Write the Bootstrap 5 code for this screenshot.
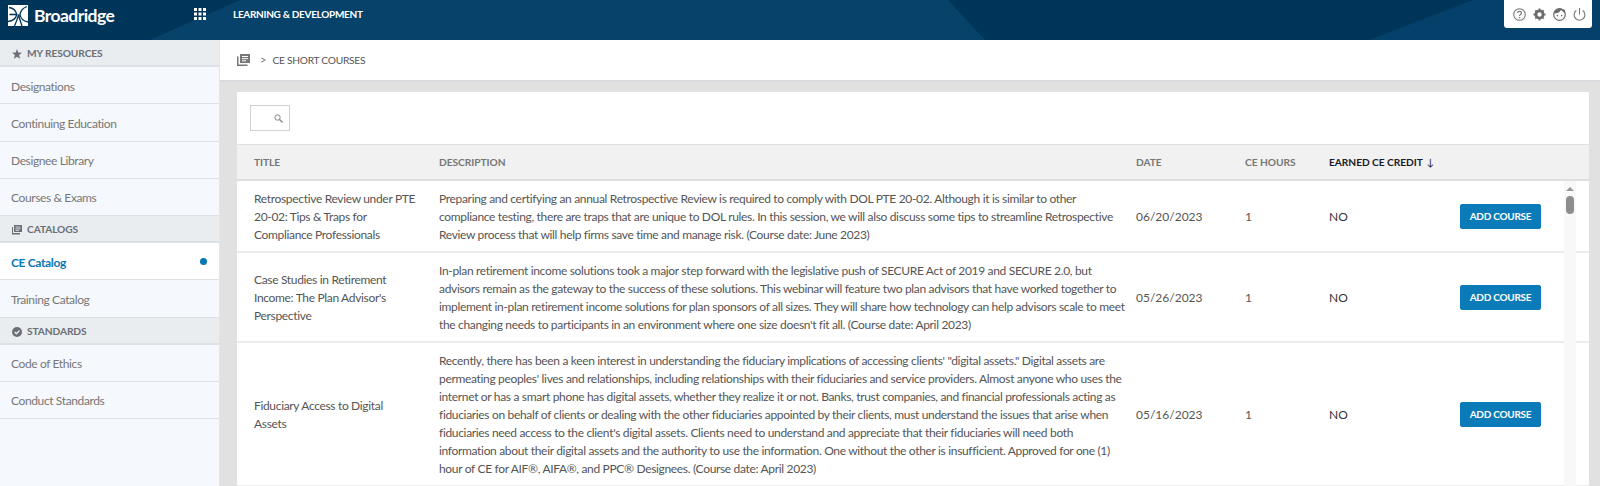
<!DOCTYPE html>
<html lang="en">
<head>
<meta charset="utf-8">
<title>CE Short Courses</title>
<link rel="stylesheet" href="https://cdn.jsdelivr.net/npm/bootstrap@5.3.0/dist/css/bootstrap.min.css">
<style>
html,body{height:486px;overflow:hidden}
body{font-family:"Lato","Liberation Sans",sans-serif;font-size:12px;color:#555;background:#e1e1e1}
.topbar{height:40px;background:#00355a;position:relative;color:#fff}
.topbar-art{position:absolute;inset:0;width:100%;height:100%}
.topbar-in{position:relative;height:40px}
.brand-box{width:220px;padding-left:8px;padding-top:3px;height:28px}
.brand-word{font-weight:700;font-size:17.5px;letter-spacing:-.55px;margin-left:6px;line-height:1}
.grid-btn{position:absolute;left:194px;top:8px;display:flex}
.app-title{margin-left:13px;font-size:10px;font-weight:700;letter-spacing:-.3px;line-height:28px}
.tools{position:absolute;right:8px;top:0;width:88px;height:28px;background:#fff;border-radius:0 0 3px 3px;gap:5px;padding-left:8px}
.side{width:220px;flex:none;background:#f5f8fc;height:446px;border-right:1px solid #e1e4e8}
.side-head{height:27px;background:#e9edf0;border-bottom:2px solid #dde1e5;color:#6b6f75;font-size:10.2px;font-weight:700;padding:3px 0 0 12px;gap:5px;letter-spacing:-.1px}
.side-link{display:flex;align-items:center;height:37.25px;padding:3px 11px 0;border-bottom:1px solid #dde1e5;color:#777;font-size:12px;letter-spacing:-.38px;text-decoration:none}
.side-link.on{background:#fff;color:#0a77b5;font-weight:700;justify-content:space-between;letter-spacing:-.35px}
.side-dot{width:7px;height:7px;border-radius:50%;background:#0a77b5;margin-right:1px;margin-top:-3px}
.mainpane{flex:1;min-width:0}
.crumbbar{height:42px;background:#fff;border-bottom:2px solid #d9d9dd;padding-left:17px;font-size:10.2px;color:#555}
.crumb-sep{margin:0 6px 0 10px;color:#777;font-size:11px}
.crumb-now{letter-spacing:-.25px;padding-top:2px}
.sheet{margin:10px 11px 0 17px;background:#fff;position:relative;height:394px;overflow:hidden}
.searchrow{height:53px;padding:13px 0 0 13px;border-bottom:1px solid #e1e1e1}
.searchbox{width:40px;height:26px;border:1px solid #cfd3d6;padding-right:6px}
.ctable{table-layout:fixed;width:1352px;margin:0;font-size:12px;line-height:18px;color:#555}
.ctable th{background:#f1f1f1;height:35px;padding:0 0 0 17px;font-size:10.2px;font-weight:700;color:#777;border-bottom:2px solid #dedede;vertical-align:middle;white-space:nowrap;letter-spacing:-.05px}
.ctable th.sorted{color:#1a1a2a}
.ctable td{padding:9px 0 7px 17px;vertical-align:middle;border-bottom:2px solid #ececec;color:#555;white-space:nowrap;background:#fff;letter-spacing:-.33px}
.ctable td.meta{letter-spacing:0}
.ctable td.answer{letter-spacing:0;color:#333}
.add-btn{--bs-btn-bg:#0a7ab8;--bs-btn-border-color:#0a7ab8;--bs-btn-color:#fff;--bs-btn-hover-bg:#0a7ab8;--bs-btn-hover-color:#fff;width:81px;height:25px;padding:0;font-size:10px;font-weight:700;letter-spacing:-.25px;border-radius:2px;margin-top:-2px}
.sort-arrow{font-weight:400;margin-left:4px}
.scrolltrack{position:absolute;right:13px;top:89px;width:12px;bottom:0;background:#f8f8f8}
.scrollup{position:absolute;left:2px;top:6px;width:0;height:0;border-left:4px solid transparent;border-right:4px solid transparent;border-bottom:4px solid #999}
.scrollthumb{position:absolute;left:2px;top:15px;width:8px;height:18px;border-radius:4px;background:#8d8d8d}
</style>
</head>
<body>
<header class="topbar">
  <svg class="topbar-art" viewBox="0 0 1600 40" preserveAspectRatio="none" aria-hidden="true">
    <polygon points="150,40 240,0 948,0 985,40" fill="#07426a"/>
    <polygon points="1369,40 1473,0 1600,0 1600,40" fill="#04406a"/>
  </svg>
  <div class="topbar-in d-flex align-items-start">
    <div class="brand-box d-flex align-items-center">
      <svg width="20" height="21" viewBox="0 0 20 21" aria-hidden="true"><rect width="20" height="21" fill="#fff"/><path d="M1 2.500C5 3 8 6 8.800 9.500C8 13 5 16 0 16.500M8.800 9.500H1.500M19 1.500C15 3 12.500 6 12 9.500C12.500 13 15 16 20 17M6.500 21C8 17 10 13 10.500 9.500C11.500 14 13 18 14 21" fill="none" stroke="#00355a" stroke-width="1.300"/></svg>
      <span class="brand-word">Broadridge</span>
      <span class="grid-btn">
        <svg width="12" height="12" viewBox="0 0 12 12" aria-hidden="true" fill="#fff"><rect width="3" height="3"/><rect x="4.500" width="3" height="3"/><rect x="9" width="3" height="3"/><rect y="4.500" width="3" height="3"/><rect x="4.500" y="4.500" width="3" height="3"/><rect x="9" y="4.500" width="3" height="3"/><rect y="9" width="3" height="3"/><rect x="4.500" y="9" width="3" height="3"/><rect x="9" y="9" width="3" height="3"/></svg>
      </span>
    </div>
    <span class="app-title">LEARNING &amp; DEVELOPMENT</span>
    <div class="tools d-flex align-items-center">
      <svg width="15" height="15" viewBox="0 0 15 15" aria-hidden="true"><circle cx="7.500" cy="7.500" r="5.800" fill="none" stroke="#777" stroke-width="1.100"/><path d="M5.600 6C5.700 3.800 9.500 3.800 9.500 6C9.500 7.500 7.500 7.300 7.500 9" fill="none" stroke="#777" stroke-width="1.200"/><circle cx="7.500" cy="10.800" r=".8" fill="#777"/></svg>
      <svg width="15" height="15" viewBox="0 0 15 15" aria-hidden="true"><circle cx="7.500" cy="7.500" r="3.600" fill="none" stroke="#6b6b6b" stroke-width="2.800"/><path d="M7.500 1.500V13.500M1.500 7.500H13.500M3.300 3.300L11.700 11.700M11.700 3.300L3.300 11.700" stroke="#6b6b6b" stroke-width="1.800" stroke-dasharray="2.300 8.400 2.300 0"/></svg>
      <svg width="15" height="15" viewBox="0 0 15 15" aria-hidden="true"><circle cx="7.500" cy="7.500" r="5.800" fill="none" stroke="#6b6b6b" stroke-width="1.200"/><path d="M2 6.500C5 6.500 8 5.500 9 3L13 6.500V3L8 1.500L3 3Z" fill="#6b6b6b"/><circle cx="5.400" cy="8.600" r=".8" fill="#6b6b6b"/><circle cx="9.600" cy="8.600" r=".8" fill="#6b6b6b"/></svg>
      <svg width="15" height="15" viewBox="0 0 15 15" aria-hidden="true"><path d="M4.300 3.500A5.400 5.400 0 1 0 10.700 3.500M7.500 1V7.500" fill="none" stroke="#777" stroke-width="1.100"/></svg>
    </div>
  </div>
</header>
<div class="d-flex">
  <nav class="side">
    <div class="side-head d-flex align-items-center"><svg width="10" height="10" viewBox="0 0 10 10" aria-hidden="true"><path d="M5 0L6.300 3.400 10 3.700 7.100 6 8.100 9.700 5 7.700 1.900 9.700 2.900 6 0 3.700 3.700 3.400Z" fill="#6b6f75"/></svg>MY RESOURCES</div>
    <a class="side-link" href="#">Designations</a>
    <a class="side-link" href="#">Continuing Education</a>
    <a class="side-link" href="#">Designee Library</a>
    <a class="side-link" href="#">Courses &amp; Exams</a>
    <div class="side-head d-flex align-items-center"><svg width="10" height="10" viewBox="0 0 10 10" aria-hidden="true"><path d="M2 0H10V7H2ZM0 2H1V8H8V9.500H0Z" fill="#6b6f75"/><path d="M3.500 2H8.500M3.500 3.800H8.500M3.500 5.400H7" stroke="#e9edf0" stroke-width=".8"/></svg>CATALOGS</div>
    <a class="side-link on" href="#">CE Catalog<span class="side-dot"></span></a>
    <a class="side-link" href="#">Training Catalog</a>
    <div class="side-head d-flex align-items-center"><svg width="10" height="10" viewBox="0 0 10 10" aria-hidden="true"><circle cx="5" cy="5" r="5" fill="#6b6f75"/><path d="M2.700 5L4.400 6.700 7.500 3.500" fill="none" stroke="#e9edf0" stroke-width="1.300"/></svg>STANDARDS</div>
    <a class="side-link" href="#">Code of Ethics</a>
    <a class="side-link" href="#">Conduct Standards</a>
  </nav>
  <main class="mainpane">
    <div class="crumbbar d-flex align-items-center">
      <svg width="13" height="12" viewBox="0 0 13 12" aria-hidden="true"><path d="M3 0H13V9H3ZM0 2.500H1.500V10.500H10.500V12H0Z" fill="#777"/><path d="M5 2.500H11M5 4.700H11M5 6.800H9" stroke="#fff" stroke-width="1"/></svg>
      <span class="crumb-sep">&gt;</span><span class="crumb-now">CE SHORT COURSES</span>
    </div>
    <section class="sheet">
      <div class="searchrow">
        <div class="searchbox d-flex align-items-center justify-content-end">
          <svg width="9" height="9" viewBox="0 0 9 9" aria-hidden="true"><circle cx="3.500" cy="3.500" r="2.700" fill="none" stroke="#888" stroke-width="1"/><path d="M5.500 5.500L8.500 8.500" stroke="#888" stroke-width="1.400"/></svg>
        </div>
      </div>
      <table class="ctable">
        <colgroup><col style="width:185px"><col style="width:697px"><col style="width:109px"><col style="width:84px"><col style="width:131px"><col></colgroup>
        <thead><tr><th>TITLE</th><th>DESCRIPTION</th><th>DATE</th><th>CE HOURS</th><th class="sorted">EARNED CE CREDIT<span class="sort-arrow">↓</span></th><th></th></tr></thead>
        <tbody>
          <tr>
            <td>Retrospective Review under PTE<br>20-02: Tips &amp; Traps for<br>Compliance Professionals</td>
            <td>Preparing and certifying an annual Retrospective Review is required to comply with DOL PTE 20-02. Although it is similar to other<br>compliance testing, there are traps that are unique to DOL rules. In this session, we will also discuss some tips to streamline Retrospective<br>Review process that will help firms save time and manage risk. (Course date: June 2023)</td>
            <td class="meta">06/20/2023</td><td class="meta">1</td><td class="answer">NO</td>
            <td class="meta"><button class="btn add-btn" type="button">ADD COURSE</button></td>
          </tr>
          <tr>
            <td>Case Studies in Retirement<br>Income: The Plan Advisor's<br>Perspective</td>
            <td>In-plan retirement income solutions took a major step forward with the legislative push of SECURE Act of 2019 and SECURE 2.0, but<br>advisors remain as the gateway to the success of these solutions. This webinar will feature two plan advisors that have worked together to<br>implement in-plan retirement income solutions for plan sponsors of all sizes. They will share how technology can help advisors scale to meet<br>the changing needs to participants in an environment where one size doesn't fit all. (Course date: April 2023)</td>
            <td class="meta">05/26/2023</td><td class="meta">1</td><td class="answer">NO</td>
            <td class="meta"><button class="btn add-btn" type="button">ADD COURSE</button></td>
          </tr>
          <tr>
            <td>Fiduciary Access to Digital<br>Assets</td>
            <td>Recently, there has been a keen interest in understanding the fiduciary implications of accessing clients' "digital assets." Digital assets are<br>permeating peoples' lives and relationships, including relationships with their fiduciaries and service providers. Almost anyone who uses the<br>internet or has a smart phone has digital assets, whether they realize it or not. Banks, trust companies, and financial professionals acting as<br>fiduciaries on behalf of clients or dealing with the other fiduciaries appointed by their clients, must understand the issues that arise when<br>fiduciaries need access to the client's digital assets. Clients need to understand and appreciate that their fiduciaries will need both<br>information about their digital assets and the authority to use the information. One without the other is insufficient. Approved for one (1)<br>hour of CE for AIF®, AIFA®, and PPC® Designees. (Course date: April 2023)</td>
            <td class="meta">05/16/2023</td><td class="meta">1</td><td class="answer">NO</td>
            <td class="meta"><button class="btn add-btn" type="button">ADD COURSE</button></td>
          </tr>
        </tbody>
      </table>
      <div class="scrolltrack"><span class="scrollup"></span><span class="scrollthumb"></span></div>
    </section>
  </main>
</div>
</body>
</html>
